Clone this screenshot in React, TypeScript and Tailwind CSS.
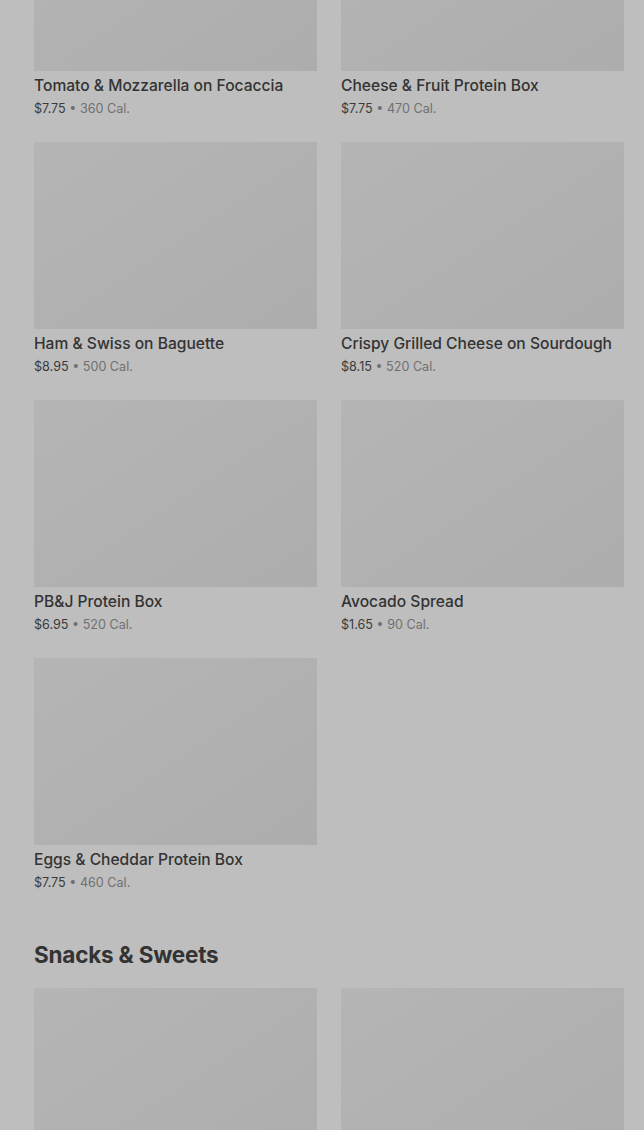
type Item = { name: string; price: string; cal: string };

const sandwiches: Item[] = [
  { name: 'Tomato & Mozzarella on Focaccia', price: '$7.75', cal: '360 Cal.' },
  { name: 'Cheese & Fruit Protein Box', price: '$7.75', cal: '470 Cal.' },
  { name: 'Ham & Swiss on Baguette', price: '$8.95', cal: '500 Cal.' },
  { name: 'Crispy Grilled Cheese on Sourdough', price: '$8.15', cal: '520 Cal.' },
  { name: 'PB&J Protein Box', price: '$6.95', cal: '520 Cal.' },
  { name: 'Avocado Spread', price: '$1.65', cal: '90 Cal.' },
  { name: 'Eggs & Cheddar Protein Box', price: '$7.75', cal: '460 Cal.' },
];

const ItemCard = ({ item }: { item: Item }) => (
  <div className="flex flex-col">
    <div className="h-[187px] w-full bg-gradient-to-br from-[#b5b5b5] to-[#adadad]" />
    <div className="pt-[5px] text-[15.6px] leading-5 font-medium text-[#333333] whitespace-nowrap">
      {item.name}
    </div>
    <div className="mt-[3px] text-[12.6px] leading-5 text-[#707070]">
      <span className="text-[#3a3a3a]">{item.price}</span> • {item.cal}
    </div>
  </div>
);

export default function App() {
  return (
    <div
      className="h-[1130px] w-[644px] overflow-hidden bg-[#bebebe]"
      style={{ fontFamily: 'Inter, "Noto Sans", sans-serif' }}
    >
      <div className="-mt-[116px] pl-[34px] pr-[20px]">
        <div className="grid grid-cols-2 gap-x-6 gap-y-[23px]">
          {sandwiches.map((item) => (
            <ItemCard key={item.name} item={item} />
          ))}
        </div>

        <h2 className="mt-[48px] text-[22.5px] leading-7 font-bold text-[#333333] tracking-[-0.2px]">
          Snacks &amp; Sweets
        </h2>

        <div className="mt-[19px] grid grid-cols-2 gap-x-6">
          <div className="h-[187px] bg-gradient-to-br from-[#b5b5b5] to-[#adadad]" />
          <div className="h-[187px] bg-gradient-to-br from-[#b5b5b5] to-[#adadad]" />
        </div>
      </div>
    </div>
  );
}
